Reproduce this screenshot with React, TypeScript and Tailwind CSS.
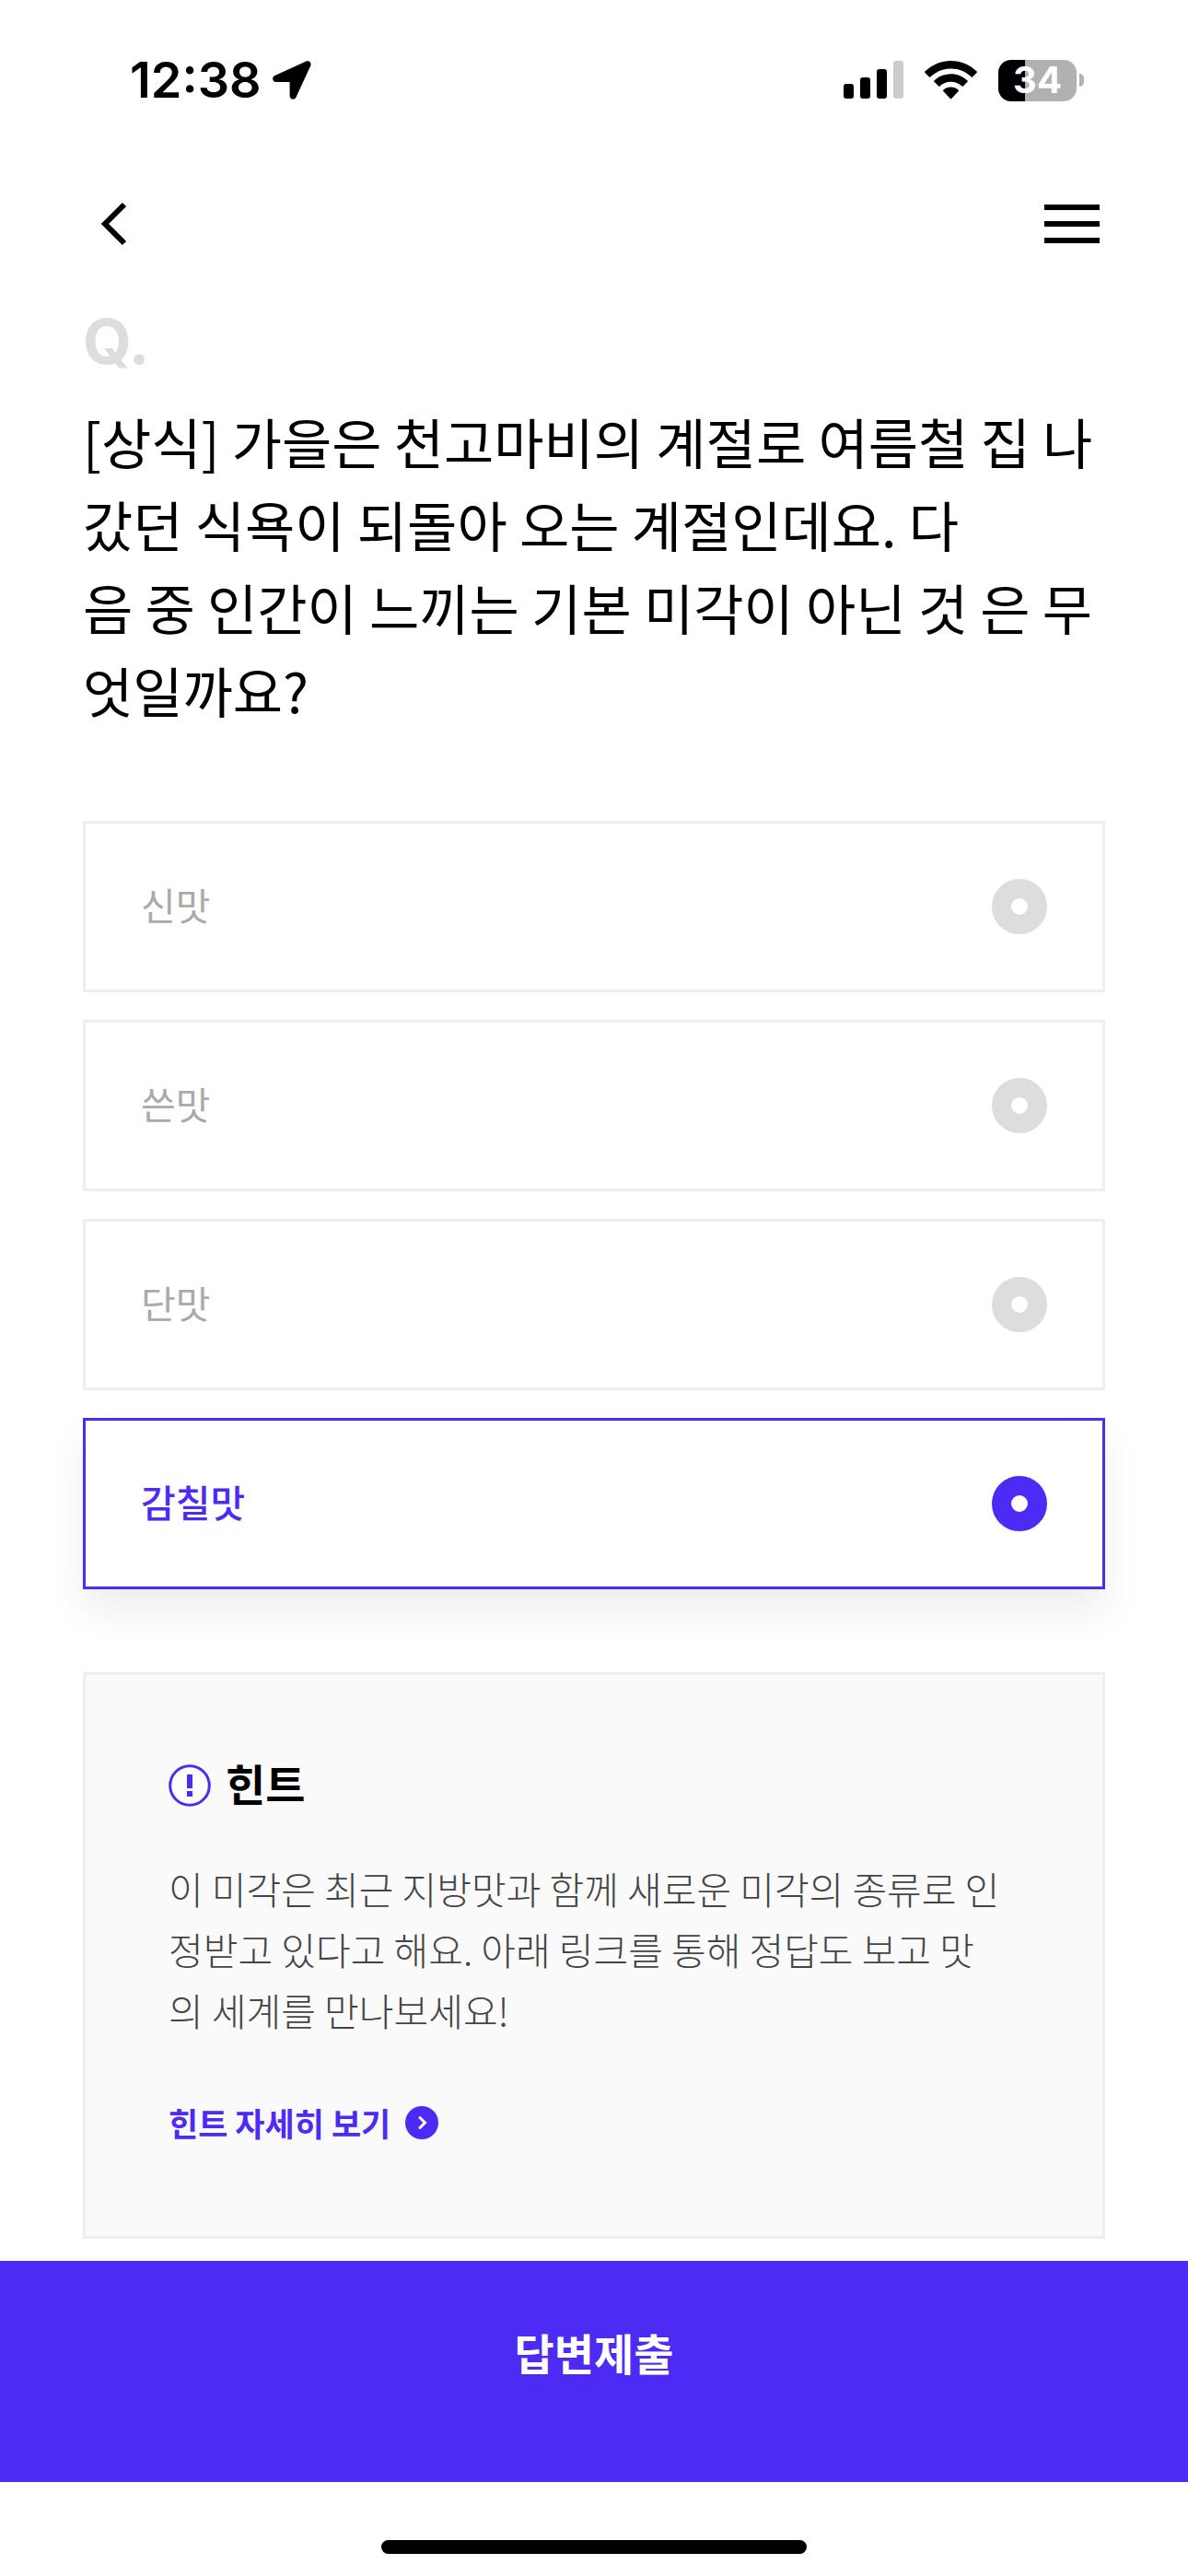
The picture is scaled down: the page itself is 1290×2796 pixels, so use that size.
import { useState } from "react";
import clsx from "clsx";

interface Choice {
  id: string;
  label: string;
}

const CHOICES: Choice[] = [
  { id: "sour", label: "신맛" },
  { id: "bitter", label: "쓴맛" },
  { id: "sweet", label: "단맛" },
  { id: "umami", label: "감칠맛" },
];

const QUESTION_LINES = [
  "[상식] 가을은 천고마비의 계절로 여름철 집 나",
  "갔던 식욕이 되돌아 오는 계절인데요. 다",
  "음 중 인간이 느끼는 기본 미각이 아닌 것 은 무",
  "엇일까요?",
];

const HINT_LINES = [
  "이 미각은 최근 지방맛과 함께 새로운 미각의 종류로 인",
  "정받고 있다고 해요. 아래 링크를 통해 정답도 보고 맛",
  "의 세계를 만나보세요!",
];

function StatusBar() {
  return (
    <div className="flex h-[174px] items-center justify-between pr-[113px] pl-[141px] font-['Inter',sans-serif]">
      <div className="flex items-center gap-3">
        <span className="text-[54px] leading-none font-semibold">12:38</span>
        <svg width="42" height="42" viewBox="0 0 42 42" aria-hidden="true">
          <path d="M36.5 .6 2.5 16C-1.2 17.8-.2 23 3.6 23H17.6Q18.6 23 18.6 24V38C18.6 42.2 23.8 43 25.5 39.5L41.2 5.5C42.6 2.2 39.8-.9 36.5 .6Z" />
        </svg>
      </div>

      <div className="flex items-center">
        <svg width="65" height="42" viewBox="0 0 65 42" aria-hidden="true">
          <rect x="0" y="25" width="11" height="16" rx="3" />
          <rect x="18" y="18" width="11" height="23" rx="3" />
          <rect x="36" y="9" width="11" height="32" rx="3" />
          <rect x="54" y="0" width="11" height="41" rx="3" fill="#cbcbcb" />
        </svg>
        <svg
          width="57"
          height="42"
          viewBox="0 0 57 42"
          className="ml-[23px]"
          aria-hidden="true"
        >
          <path d="M28.5 0C17.8 0 7.6 4.2 .4 11.6Q-.2 12.3 .4 12.9L5 17.6Q5.6 18.2 6.2 17.6C12.2 11.8 20.1 8.6 28.5 8.6S44.8 11.8 50.8 17.6Q51.4 18.2 52 17.6L56.6 12.9Q57.2 12.3 56.6 11.6C49.4 4.2 39.2 0 28.5 0Z" />
          <path d="M28.5 14.2C21.6 14.2 15.2 16.8 10.4 21.5Q9.8 22.1 10.4 22.7L15.2 27.6Q15.8 28.2 16.4 27.6C19.7 24.5 24 22.8 28.5 22.8S37.3 24.5 40.6 27.6Q41.2 28.2 41.8 27.6L46.6 22.7Q47.2 22.1 46.6 21.5C41.8 16.8 35.4 14.2 28.5 14.2Z" />
          <path d="M28.5 28.6C25.4 28.6 22.5 29.7 20.3 31.7Q19.6 32.3 20.3 33L27.8 41.1Q28.5 41.8 29.2 41.1L36.7 33Q37.4 32.3 36.7 31.7C34.5 29.7 31.6 28.6 28.5 28.6Z" />
        </svg>
        <div className="ml-[23px] flex items-center gap-[3px]">
          <div className="flex h-[45px] w-[85px] items-center justify-center rounded-[14px] bg-linear-to-r from-black from-34% to-[#b1b1b1] to-34% text-[40px] leading-none font-bold text-white">
            34
          </div>
          <div className="h-[14px] w-[5px] rounded-r-full bg-[#b1b1b1]" />
        </div>
      </div>
    </div>
  );
}

export default function App() {
  const [selected, setSelected] = useState("umami");

  return (
    <div className="flex min-h-screen flex-col bg-white font-['Noto_Sans_CJK_KR',sans-serif] text-black">
      <StatusBar />

      {/* Header */}
      <header className="flex h-[138px] items-center justify-between px-24">
        <button type="button" aria-label="뒤로">
          <svg
            width="60"
            height="60"
            viewBox="0 0 60 60"
            fill="none"
            stroke="currentColor"
            strokeWidth="6"
          >
            <path d="M39 9 18 30l21 21" />
          </svg>
        </button>
        <button type="button" aria-label="메뉴">
          <svg width="60" height="60" viewBox="0 0 60 60">
            <path d="M0 9h60v6H0zM0 27h60v6H0zM0 45h60v6H0z" />
          </svg>
        </button>
      </header>

      <main className="flex-1 px-[90px] pt-6 pb-6">
        {/* Question */}
        <p className="font-['Inter',sans-serif] text-[68px] leading-[68px] font-bold text-[#ddd]">
          Q.
        </p>
        <h1 className="mt-[30px] text-[59px] leading-[90px] font-normal">
          {QUESTION_LINES.map((line) => (
            <span key={line} className="block whitespace-nowrap">
              {line}
            </span>
          ))}
        </h1>

        {/* Choices */}
        <div
          role="radiogroup"
          className="mt-[97px] flex flex-col gap-[30px]"
        >
          {CHOICES.map((choice) => {
            const active = choice.id === selected;
            return (
              <label
                key={choice.id}
                className={clsx(
                  "flex items-center justify-between border-3 bg-white p-[60px] text-[41px] leading-[54px]",
                  active
                    ? "border-[#4d2bf5] font-medium text-[#4d2bf5] shadow-[0_24px_40px_rgba(0,0,0,0.07)]"
                    : "border-[#eee] font-normal text-[#aaa]"
                )}
              >
                <span className="pb-1.5">{choice.label}</span>
                <input
                  type="radio"
                  name="answer"
                  value={choice.id}
                  checked={active}
                  onChange={() => setSelected(choice.id)}
                  className={clsx(
                    "size-[60px] appearance-none rounded-full border-[21px] bg-white",
                    active ? "border-[#4d2bf5]" : "border-[#ddd]"
                  )}
                />
              </label>
            );
          })}
        </div>

        {/* Hint */}
        <section className="mt-[90px] border-3 border-[#eee] bg-[#fafafa] px-[90px] pt-[90px] pb-[105px]">
          <h2 className="flex items-center gap-4 text-[47px] leading-[54px] font-bold">
            <svg width="46" height="46" viewBox="0 0 46 46" aria-hidden="true">
              <circle
                cx="23"
                cy="23"
                r="21.3"
                fill="#fff"
                stroke="#4d2bf5"
                strokeWidth="3"
              />
              <path d="M20 11h6v15h-6zM20 29h6v6h-6z" fill="#4d2bf5" />
            </svg>
            <span className="pb-1.5">힌트</span>
          </h2>
          <p className="mt-12 text-[41px] leading-[66px] font-light text-[#444]">
            {HINT_LINES.map((line) => (
              <span key={line} className="block whitespace-nowrap">
                {line}
              </span>
            ))}
          </p>
          <a
            href="#hint"
            className="mt-[72px] flex w-fit items-center gap-4 text-[35px] leading-9 font-bold text-[#4d2bf5]"
          >
            힌트 자세히 보기
            <svg width="36" height="36" viewBox="0 0 36 36" fill="none">
              <circle cx="18" cy="18" r="18" fill="#4d2bf5" />
              <path
                d="m16 12.5 5.5 5.5-5.5 5.5"
                stroke="#fff"
                strokeWidth="3"
                strokeLinecap="round"
              />
            </svg>
          </a>
        </section>
      </main>

      <button
        type="button"
        className="w-full bg-[#4d2bf5] pt-[69px] pb-[111px] text-[47px] leading-[60px] font-bold text-white"
      >
        답변제출
      </button>

      {/* Home indicator */}
      <div className="flex justify-center pt-[63px] pb-6">
        <div className="h-[15px] w-[462px] rounded-full bg-black" />
      </div>
    </div>
  );
}
